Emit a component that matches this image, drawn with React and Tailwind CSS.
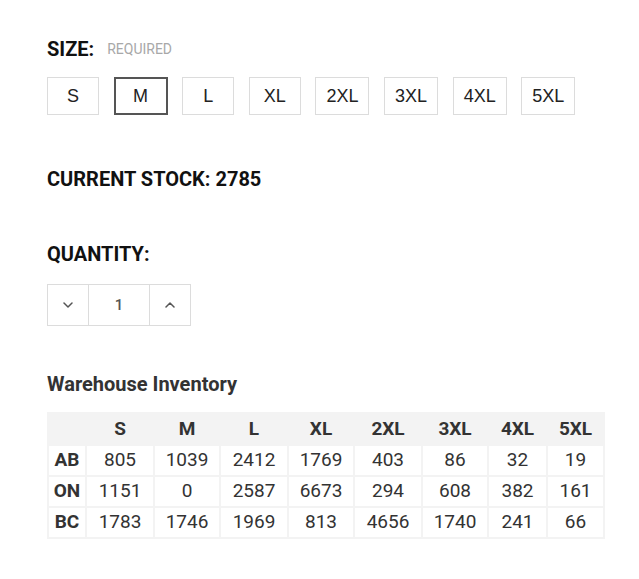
import React from "react";

const sizes = ["S", "M", "L", "XL", "2XL", "3XL", "4XL", "5XL"];
const colWidths = ["w-[66px]", "w-[64px]", "w-[66px]", "w-[64px]", "w-[66px]", "w-[64px]", "w-[57px]", "w-[55px]"];

const inventory = [
  { region: "AB", counts: [805, 1039, 2412, 1769, 403, 86, 32, 19] },
  { region: "ON", counts: [1151, 0, 2587, 6673, 294, 608, 382, 161] },
  { region: "BC", counts: [1783, 1746, 1969, 813, 4656, 1740, 241, 66] },
];

function Chevron({ up }) {
  return (
    <svg width="10" height="6" viewBox="0 0 10 6" fill="none">
      <path
        d={up ? "M1 5L5 1L9 5" : "M1 1L5 5L9 1"}
        stroke="#555"
        strokeWidth="1.5"
        strokeLinecap="round"
        strokeLinejoin="round"
      />
    </svg>
  );
}

export default function App() {
  return (
    <div className="min-h-[579px] bg-white pl-[47px] pt-[37px] font-['Roboto',sans-serif] text-[#111]">
      {/* size picker */}
      <div className="flex h-[24px] items-center gap-[13px]">
        <span className="text-[20px] font-bold">SIZE:</span>
        <span className="text-[14px] text-[#a8a8a8]">REQUIRED</span>
      </div>
      <div className="mt-[16px] flex gap-[14.6px]">
        {sizes.map((s) => (
          <button
            key={s}
            className={`flex h-[38px] items-center justify-center px-[10px] font-['Liberation_Sans',Arial,sans-serif] text-[18px] text-[#222] ${
              s === "M" ? "min-w-[54px] border-2 border-[#555]" : "min-w-[52px] border border-[#dcdcdc]"
            }`}
          >
            {s}
          </button>
        ))}
      </div>

      <div className="mt-[52px] h-[24px] text-[20px] font-bold leading-[24px]">CURRENT STOCK: 2785</div>

      <div className="mt-[51px] h-[24px] text-[20px] font-bold leading-[24px]">QUANTITY:</div>

      {/* stepper */}
      <div className="mt-[18px] flex h-[42px] w-[144px] border border-[#dcdcdc]">
        <button className="flex w-[41px] items-center justify-center border-r border-[#dcdcdc]">
          <Chevron />
        </button>
        <div className="flex w-[60px] items-center justify-center text-[15px] font-medium text-[#555]">1</div>
        <button className="flex flex-1 items-center justify-center border-l border-[#dcdcdc]">
          <Chevron up />
        </button>
      </div>

      {/* warehouse inventory */}
      <h3 className="mt-[46px] h-[24px] text-[20px] font-bold leading-[24px] text-[#333]">Warehouse Inventory</h3>
      <table className="mt-[16px] border-separate border-spacing-[2px] bg-[#f3f3f3] text-[19px] text-[#333]">
        <thead>
          <tr className="h-[30px]">
            <th className="w-[36px]"></th>
            {sizes.map((s, i) => (
              <th key={s} className={`${colWidths[i]} text-center font-bold`}>
                {s}
              </th>
            ))}
          </tr>
        </thead>
        <tbody>
          {inventory.map((row) => (
            <tr key={row.region} className="h-[29px]">
              <td className="bg-white text-center font-bold">{row.region}</td>
              {row.counts.map((n, i) => (
                <td key={i} className="bg-white text-center">
                  {n}
                </td>
              ))}
            </tr>
          ))}
        </tbody>
      </table>
    </div>
  );
}
